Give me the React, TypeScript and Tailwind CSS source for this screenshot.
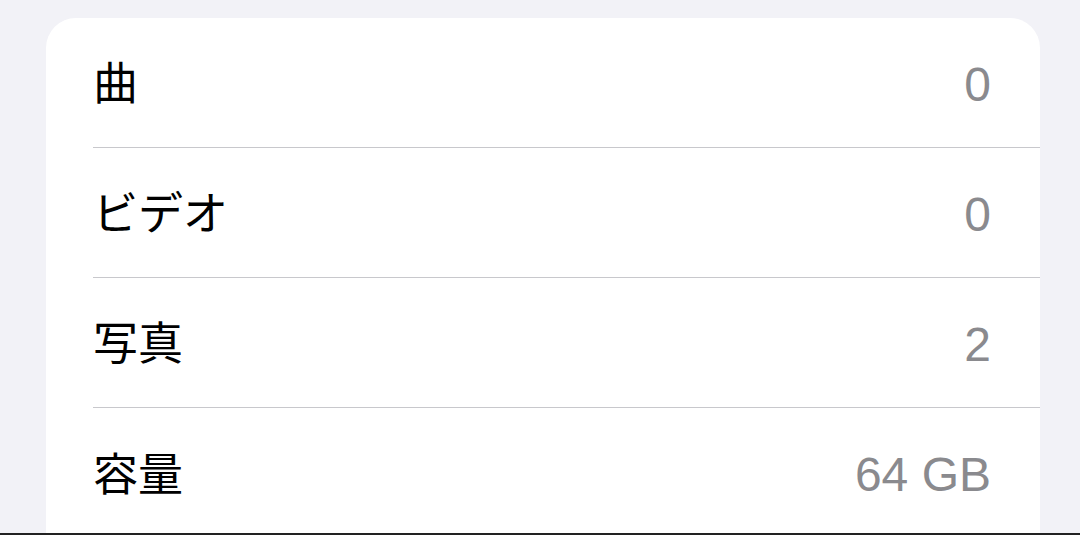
const rows = [
  { label: "曲", value: "0" },
  { label: "ビデオ", value: "0" },
  { label: "写真", value: "2" },
  { label: "容量", value: "64 GB" },
];

const font = '"Liberation Sans", "Noto Sans CJK JP", sans-serif';

const App = () => {
  return (
    <div className="relative h-[535px] w-[1080px] overflow-hidden bg-[#f2f2f7] pt-[18px] pl-[46px] pr-[40px]">
      <div className="h-[600px] rounded-[30px] bg-white pl-[47px]">
        {rows.map((row, i) => (
          <div
            key={row.label}
            className={`flex h-[130px] items-center justify-between pr-[49px] ${
              i < rows.length - 1 ? "border-b-[1.5px] border-[#c8c8cc]" : ""
            }`}
          >
            <span className="pt-[5px] text-[45px] text-black" style={{ fontFamily: font }}>
              {row.label}
            </span>
            <span className="pt-[4px] text-[48px] text-[#8a8a8e]" style={{ fontFamily: font }}>
              {row.value}
            </span>
          </div>
        ))}
      </div>
      <div className="absolute bottom-0 left-0 h-[2px] w-full bg-[#222222]" />
    </div>
  );
};

export default App;
